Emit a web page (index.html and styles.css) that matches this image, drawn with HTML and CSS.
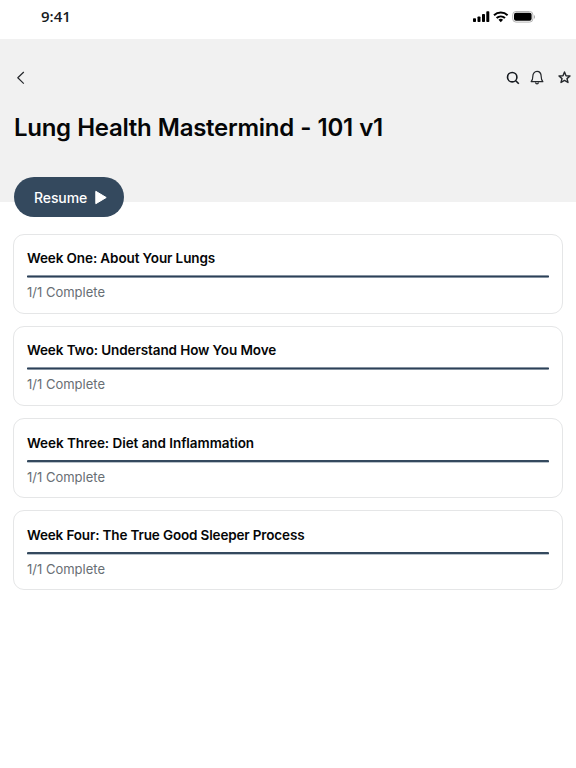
FILE: index.html
```html
<!DOCTYPE html>
<html lang="en">
<head>
<meta charset="utf-8">
<title>Lung Health Mastermind</title>
<link rel="stylesheet" href="styles.css">
</head>
<body>
<div class="status">
  <span class="time">9:41</span>
  <svg class="signals" width="64" height="14" viewBox="0 0 64 14">
    <rect x="1" y="8.3" width="3" height="3.7" rx=".8"/><rect x="5.5" y="6.4" width="3" height="5.6" rx=".8"/><rect x="10" y="4" width="3" height="8" rx=".8"/><rect x="14.3" y="1.3" width="3" height="10.7" rx=".8"/>
    <g class="wifi"><path d="M22 5.2a10 10 0 0 1 13.6 0"/><path d="M24.6 8.1a6.2 6.2 0 0 1 8.4 0"/></g><path d="M26.5 9.8a3.6 3.6 0 0 1 4.6 0L28.8 12.2z"/>
    <rect class="shell" x="40.7" y="1.5" width="20.2" height="10.6" rx="3.3"/><rect x="42" y="2.8" width="17.6" height="8" rx="2"/><path class="tip" d="M62 5v3.8q1-.6 1-1.9T62 5z"/>
  </svg>
</div>
<header class="hero">
  <nav class="bar">
    <svg class="back" width="10" height="14" viewBox="0 0 10 14"><path d="M7.8 1 1.8 6.800l6 5.800"/></svg>
    <div class="actions">
      <svg class="search" width="14" height="14" viewBox="0 0 14 14"><circle cx="6.2" cy="6.2" r="4.7"/><path d="m9.7 9.7 3.100 3.100"/></svg>
      <svg class="bell" width="14" height="15" viewBox="0 0 14 15"><path d="M1.1 11.6c1.2-1 1.7-2.5 1.7-5.2C2.8 3.5 4.5 1.400 7 1.400s4.200 2.100 4.200 5c0 2.700.5 4.200 1.700 5.200z"/><path d="M5.500 12.400q.2 1.400 1.500 1.400t1.500-1.400"/></svg>
      <svg class="star" width="13" height="13" viewBox="0 0 13 13"><path d="m6.500 1 1.500 3.700 4 .3-3 2.600 1 3.900-3.500-2.100L3 11.500l1-3.900L1 5l4-.3z"/></svg>
    </div>
  </nav>
  <h1>Lung Health Mastermind - 101 v1</h1>
  <button class="resume"><span>Resume</span><svg width="12" height="15" viewBox="0 0 12 15"><path d="M.8 1.300v12.400L11.200 7.500z"/></svg></button>
</header>
<main class="weeks">
  <section class="card"><h2 class="one">Week One: About Your Lungs</h2><div class="progress soft"></div><p>1/1 Complete</p></section>
  <section class="card"><h2 class="two">Week Two: Understand How You Move</h2><div class="progress soft"></div><p>1/1 Complete</p></section>
  <section class="card"><h2 class="three">Week Three: Diet and Inflammation</h2><div class="progress"></div><p>1/1 Complete</p></section>
  <section class="card"><h2 class="four">Week Four: The True Good Sleeper Process</h2><div class="progress"></div><p>1/1 Complete</p></section>
</main>
</body>
</html>
```
FILE: styles.css
```css
* { box-sizing: border-box; }
body { margin: 0; background: #fff; color: #050607; font-family: Inter, sans-serif; }
h1, h2, p { margin: 0; white-space: nowrap; }
svg { display: block; flex: none; }
.status { height: 39px; padding: 8px 40px 0 41px; display: flex; justify-content: space-between; align-items: flex-start; }
.time { font: 600 15px/16px "Open Sans", sans-serif; color: #171a1e; }
.signals { margin-top: 2px; fill: #000; }
.wifi { fill: none; stroke: #000; stroke-width: 2; }
.signals .shell { fill: none; stroke: #b5b5b5; }
.signals .tip { fill: #aaa; }
.hero { height: 163px; background: #f1f1f1; padding: 31px 5px 0 14px; }
.bar { height: 15px; display: flex; justify-content: space-between; align-items: center; padding-left: 2px; }
.bar svg { fill: none; stroke: #24272b; stroke-width: 1.2; stroke-linejoin: round; }
.bar .search { stroke: #15191f; stroke-width: 1.6; }
.bar .star { stroke-width: 1.4; }
.actions { display: flex; align-items: center; }
.bell { margin-left: 10px; }
.star { margin-left: 14px; }
h1 { margin-top: 27px; font-size: 24px; line-height: 32px; font-weight: 600; letter-spacing: -.28px; word-spacing: .6px; }
.resume { display: flex; align-items: center; gap: 8px; width: 110px; height: 40px; margin-top: 33px; padding: 1px 0 0 20px; border: 0; border-radius: 20px; background: #34495e; color: #fff; font: 500 14px/20px Inter, sans-serif; letter-spacing: -.1px; }
.resume svg { fill: #fff; stroke: #fff; stroke-linejoin: round; }
.weeks { padding: 31.500px 13px 0 12.500px; display: grid; gap: 12px; }
.card { height: 80.200px; border: 1px solid #e5e6e7; border-radius: 11px; padding: 13.700px 13px 0 13.500px; }
h2 { font-size: 13.500px; line-height: 20px; font-weight: 600; }
.one { letter-spacing: -.11px; }
.two { letter-spacing: -.1px; }
.three { letter-spacing: -.05px; }
.four { letter-spacing: -.15px; }
.progress { height: 3px; margin-top: 7px; border-radius: 1px; background: linear-gradient(#34495e 2px, #b9c2ca 2px); }
.progress.soft { background: linear-gradient(#8592a0 1px, #2c4158 1px 2px, #8592a0 2px); }
.card p { margin-top: 4px; color: #686e74; font-size: 13px; line-height: 20px; }
```
